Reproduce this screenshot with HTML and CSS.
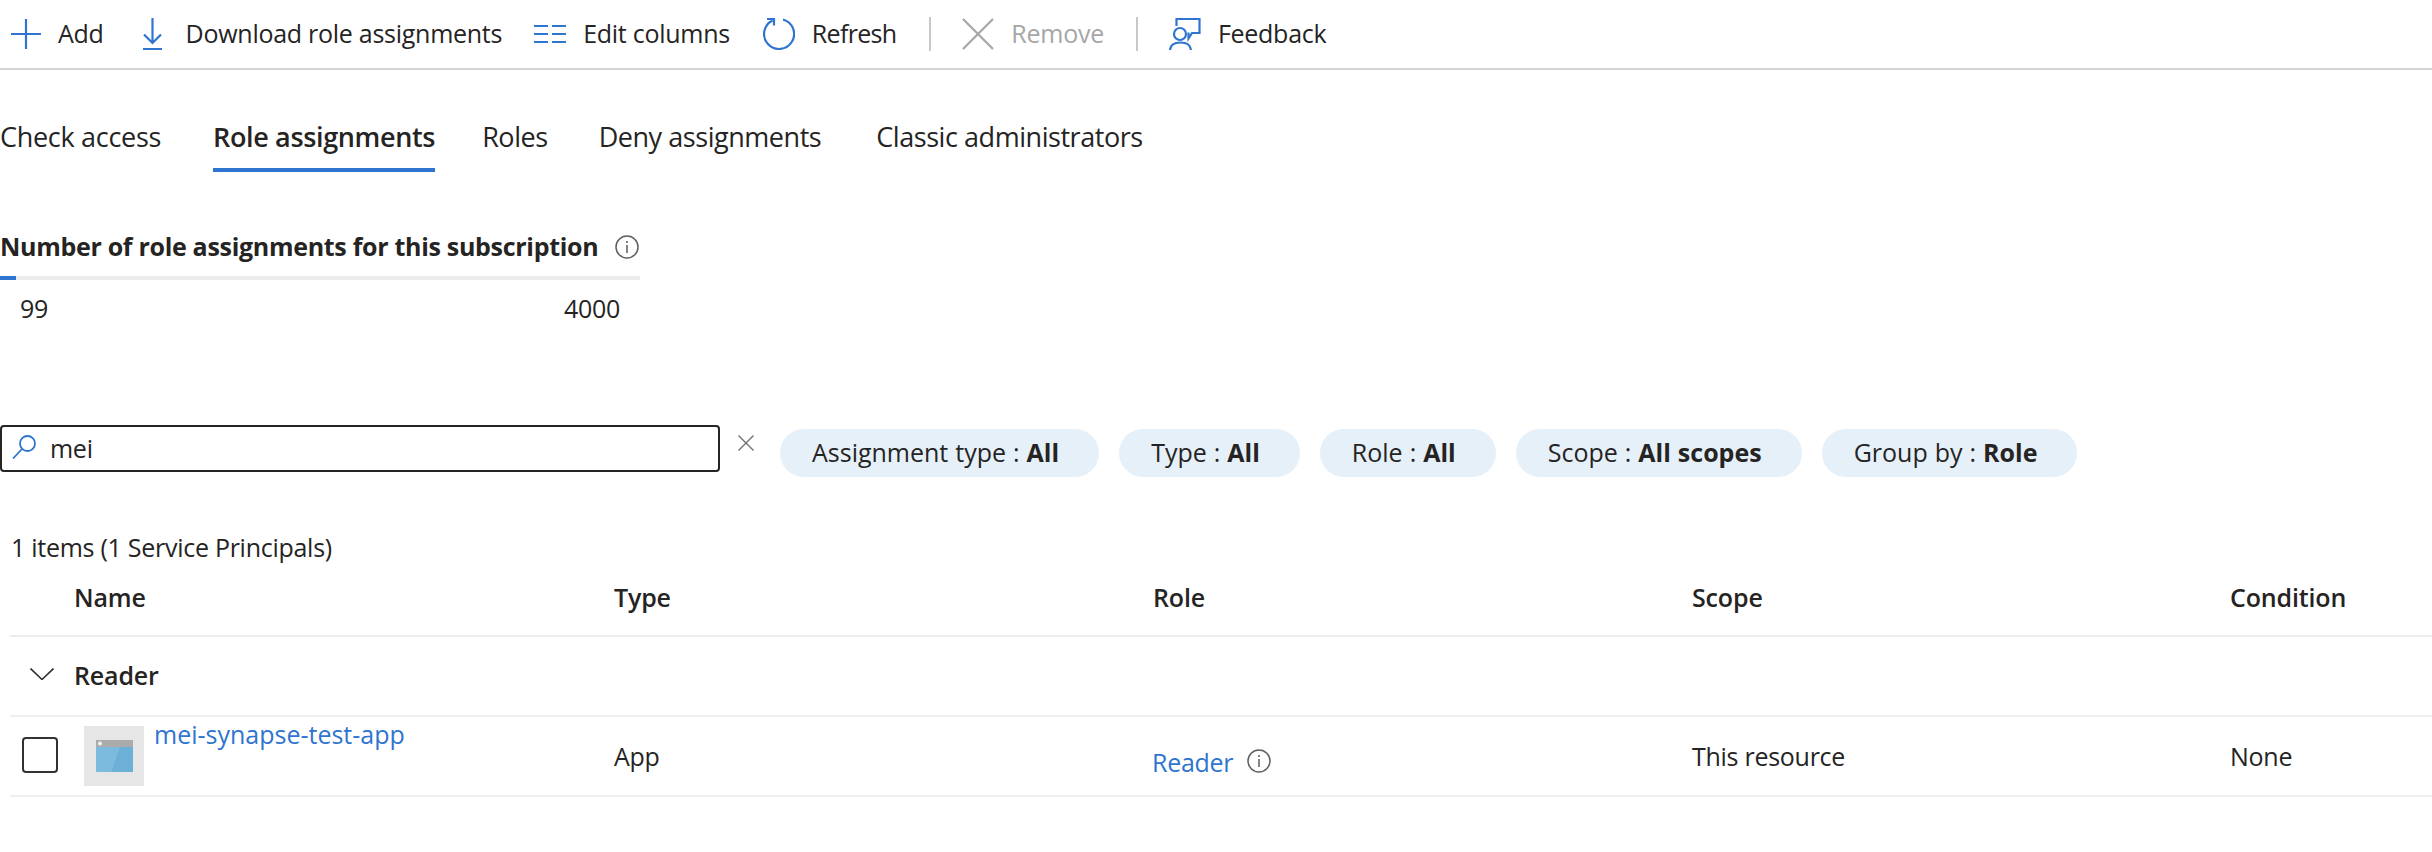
FILE: index.html
```html
<!DOCTYPE html>
<html lang="en">
<head>
<meta charset="utf-8">
<title>Role assignments</title>
<link rel="stylesheet" href="styles.css">
</head>
<body>
<div class="toolbar">
  <button class="tool t-add"><svg class="ic" width="30" height="30" viewBox="0 0 30 30"><path d="M15 0V30M0 15H30"/></svg><span>Add</span></button>
  <button class="tool t-down"><svg class="ic" width="19" height="32" viewBox="0 0 19 32"><path d="M9.5 0V25M1 16.5L9.500 25L18 16.500M0 31H19"/></svg><span>Download role assignments</span></button>
  <button class="tool t-cols"><svg class="ic" width="32" height="18" viewBox="0 0 32 18"><path d="M0 1H14M18 1H32M0 9H14M18 9H32M0 17H14M18 17H32"/></svg><span>Edit columns</span></button>
  <button class="tool t-ref"><svg class="ic" width="32" height="32" viewBox="0 0 32 32"><path d="M20 1.500A15 15 0 1 1 9.500 2.500M4 1H11V7.500"/></svg><span>Refresh</span></button>
  <i class="sep s1"></i>
  <button class="tool t-rem"><svg class="ic off" width="32" height="32" viewBox="0 0 32 32"><path d="M1 1L31 31M31 1L1 31"/></svg><span>Remove</span></button>
  <i class="sep s2"></i>
  <button class="tool t-fb"><svg class="ic" width="32" height="32" viewBox="0 0 32 32"><path d="M7.500 8V1H30.500V15H23L19.500 20.500V14.500"/><circle cx="11" cy="16" r="6"/><path d="M1 33C1 27 5 24.500 11.500 24.500S22 27 22 33"/></svg><span>Feedback</span></button>
</div>
<nav class="tabs">
  <a class="tab tb1">Check access</a>
  <a class="tab on">Role assignments</a>
  <a class="tab tb3">Roles</a>
  <a class="tab tb4">Deny assignments</a>
  <a class="tab tb5">Classic administrators</a>
</nav>
<section class="quota">
  <div class="q-title"><strong>Number of role assignments for this subscription</strong><svg class="info" width="24" height="24" viewBox="0 0 24 24"><circle cx="12" cy="12" r="11"/><path d="M12 10V18M12 6V8"/></svg></div>
  <div class="bar"><div class="fill" style="width:16px"></div></div>
  <div class="vals"><span>99</span><span>4000</span></div>
</section>
<div class="filters">
  <div class="search"><svg class="s-ic" width="24" height="24" viewBox="0 0 24 24"><circle cx="15.500" cy="8.500" r="7.500"/><path d="M10 14L1 23.500"/></svg><span>mei</span></div>
  <svg class="clear" width="16" height="16" viewBox="0 0 16 16"><path d="M.5 .5L15.500 15.500M15.500 .5L.5 15.500"/></svg>
  <div class="pills">
    <span class="pill">Assignment type : <b>All</b></span>
    <span class="pill">Type : <b>All</b></span>
    <span class="pill">Role : <b>All</b></span>
    <span class="pill">Scope : <b>All scopes</b></span>
    <span class="pill">Group by : <b>Role</b></span>
  </div>
</div>
<p class="count">1 items (1 Service Principals)</p>
<div class="table">
  <div class="row head">
    <div class="first">Name</div><div>Type</div><div>Role</div><div>Scope</div><div>Condition</div>
  </div>
  <div class="group">
    <svg class="chev" width="24" height="12" viewBox="0 0 24 12"><path d="M.5 .5L12 11.500L23.500 .5"/></svg><span>Reader</span>
  </div>
  <div class="row item">
    <div class="namecell">
      <span class="check"></span>
      <span class="tile"><svg width="37" height="32" viewBox="0 0 37 32"><rect width="37" height="32" rx="1" fill="#7cbbdd"/><path d="M37 7V32H15L24 7Z" fill="#6cb0d8"/><rect width="37" height="7" fill="#ababab"/><circle cx="4" cy="3.500" r="2" fill="#f2f2f2"/></svg></span>
      <a class="link nm">mei-synapse-test-app</a>
    </div>
    <div class="c-app">App</div>
    <div class="c-role"><a class="link lk">Reader</a><svg class="info" width="24" height="24" viewBox="0 0 24 24"><circle cx="12" cy="12" r="11"/><path d="M12 10V18M12 6V8"/></svg></div>
    <div class="c-app">This resource</div>
    <div class="c-app">None</div>
  </div>
</div>
</body>
</html>
```
FILE: styles.css
```css
* { box-sizing: border-box; }
html, body { margin: 0; padding: 0; background: #fff; }
body {
  width: 2432px;
  height: 852px;
  overflow: hidden;
  font-family: "Open Sans", "Noto Sans", "Liberation Sans", sans-serif;
  font-size: 25px;
  letter-spacing: -0.27px;
  color: #252423;
}
svg { display: block; flex: none; fill: none; }

.toolbar {
  display: flex;
  align-items: center;
  height: 70px;
  border-bottom: 2px solid #d4d4d4;
}
.tool {
  display: flex;
  align-items: center;
  padding: 0;
  border: 0;
  background: none;
  font: inherit;
  letter-spacing: inherit;
  color: inherit;
}
.tool span { margin-top: -2px; }
.ic { stroke: #2f75cf; stroke-width: 2.2; margin-right: 17px; }
.ic.off { stroke: #a6a6a6; }
.t-rem { color: #a6a6a6; }
.t-add { margin-left: 11px; }
.t-down { margin-left: 39px; }
.t-down .ic { margin-right: 24px; }
.t-cols { margin-left: 32px; }
.t-ref { margin-left: 33px; letter-spacing: -0.7px; }
.t-rem { margin-left: 31px; }
.t-fb { margin-left: 31px; }
.sep { display: block; width: 2px; height: 34px; background: #c8c8c8; }
.s1 { margin-left: 33px; }
.s2 { margin-left: 32px; }

.tabs { display: flex; height: 102px; padding-top: 48px; font-size: 27px; letter-spacing: -0.45px; }
.tab { height: 54px; line-height: 38px; }
.tb1 { letter-spacing: -0.3px; }
.tab.on { margin-left: 52px; font-weight: 600; letter-spacing: -0.35px; border-bottom: 4px solid #2f75cf; padding-bottom: 10px; }
.tb3 { margin-left: 47px; }
.tb4 { margin-left: 51px; }
.tb5 { margin-left: 55px; }

.quota { width: 640px; margin-top: 59px; }
.q-title { display: flex; align-items: center; height: 32px; gap: 17px; }
.q-title strong { font-weight: 700; letter-spacing: -0.3px; margin-top: -3px; }
.info { stroke: #605e5c; stroke-width: 1.5; }
.bar { height: 4px; margin-top: 13px; background: #ebebeb; }
.fill { height: 100%; background: #2f75cf; }
.vals { display: flex; justify-content: space-between; height: 32px; margin-top: 13px; padding: 0 20px; line-height: 30px; }

.filters { display: flex; align-items: flex-start; height: 52px; margin-top: 100px; }
.search {
  display: flex;
  align-items: center;
  width: 720px;
  height: 47px;
  padding-left: 10px;
  border: 2px solid #252423;
  border-radius: 4px;
}
.search span { margin: -2px 0 0 14px; }
.s-ic { stroke: #2f75cf; stroke-width: 1.8; margin-top: -4px; }
.clear { stroke: #707070; stroke-width: 1.4; margin: 10px 26px 0 18px; }
.pills { display: flex; gap: 20px; margin-top: 4px; }
.pill {
  height: 48px;
  padding: 0 40px 0 32px;
  line-height: 46px;
  border-radius: 24px;
  background: #e6f0f9;
  letter-spacing: 0;
  word-spacing: 0.5px;
  white-space: pre;
}
.pill b { font-weight: 700; }

.count { height: 32px; margin: 55px 0 0 11px; line-height: 30px; }

.table { margin-left: 10px; }
.row { display: grid; grid-template-columns: 604px 539px 539px 538px 1fr; }
.first { padding-left: 64px; }
.head {
  height: 73px;
  font-weight: 600;
  letter-spacing: -0.15px;
  line-height: 67px;
  border-bottom: 2px solid #ececec;
}
.group {
  display: flex;
  align-items: center;
  height: 80px;
  font-weight: 600;
  letter-spacing: -0.15px;
  border-bottom: 2px solid #f0f0f0;
}
.group span { margin-top: -2px; }
.chev { stroke: #323130; stroke-width: 1.6; margin: -4px 20px 0 20px; }
.item { height: 80px; border-bottom: 2px solid #f0f0f0; }
.namecell { display: flex; padding-left: 12px; align-items: flex-start; }
.check {
  width: 36px;
  height: 36px;
  margin-top: 20px;
  border: 2px solid #323130;
  border-radius: 4px;
}
.tile {
  display: flex;
  align-items: center;
  justify-content: center;
  width: 60px;
  height: 60px;
  margin: 9px 0 0 26px;
  background: #e6e6e6;
}
.link { color: #2f75cf; }
.nm { margin: 1px 0 0 10px; line-height: 32px; letter-spacing: 0; }
.c-app { line-height: 32px; padding-top: 23px; }
.c-role { display: flex; align-items: center; gap: 14px; margin-left: -1px; padding-top: 32px; height: 56px; line-height: 32px; }
.lk { margin-top: 2px; }
```
